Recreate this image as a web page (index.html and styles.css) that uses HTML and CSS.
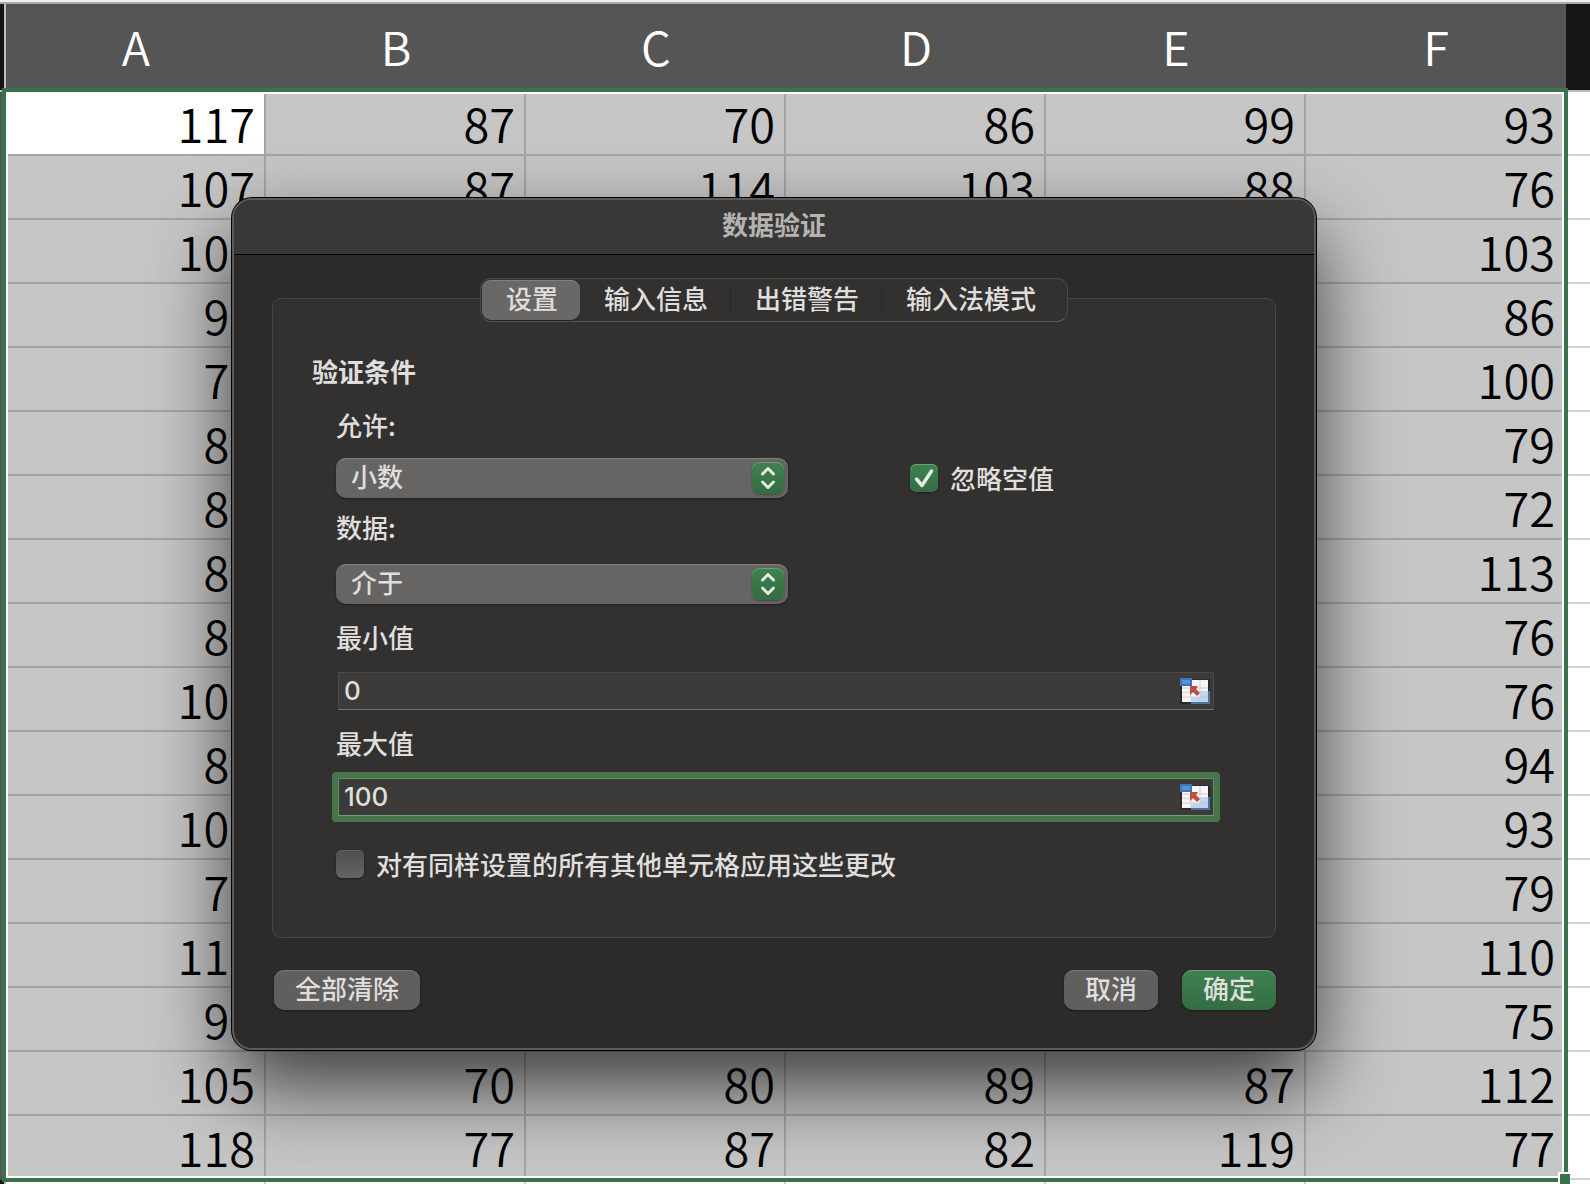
FILE: index.html
```html
<!DOCTYPE html>
<html lang="zh-CN">
<head>
<meta charset="utf-8">
<title>数据验证</title>
<link rel="stylesheet" href="styles.css">
</head>
<body>
<svg class="symbols" aria-hidden="true">
  <symbol id="stepper" viewBox="0 0 32 32">
    <path d="M10.500 12 16 6.500l5.500 5.500M10.500 20 16 25.500l5.500-5.500" fill="none" stroke="#e3ece4" stroke-width="3" stroke-linecap="round" stroke-linejoin="round"/>
  </symbol>
  <symbol id="range" viewBox="0 0 30 26">
    <rect y="1" width="30" height="25" fill="#2a2928"/>
    <rect x="2" y="2" width="26" height="22" fill="#f6f6f6"/>
    <path d="M2 10h26M2 14.500h26M2 19h26M11 2v22M20 2v22" stroke="#dcdcdc" stroke-width="1.500" fill="none"/>
    <path d="M20 13h8.500v11.500H11V19h9z" fill="#c3d5ea"/>
    <path d="M29 13v12H11" fill="none" stroke="#52719c" stroke-width="2"/>
    <path d="M20 19h8M20 19v5" stroke="#b2c7e0" fill="none"/>
    <rect width="12" height="8" fill="#3f74bb"/>
    <rect x="2" y="2" width="8" height="4" fill="#5b90d2"/>
    <path d="M10 8h8l-2 3 4 4-3 3-4-4-3 3z" fill="#bd4c46"/>
  </symbol>
</svg>
<main class="sheet">
  <table class="grid">
    <colgroup><col class="col-rows"><col class="col-data" span="6"><col></colgroup>
    <thead>
      <tr><th class="edge"></th><th scope="col">A</th><th scope="col">B</th><th scope="col">C</th><th scope="col">D</th><th scope="col">E</th><th scope="col">F</th><th class="idle"></th></tr>
    </thead>
    <tbody>
      <tr><th></th><td class="active">117</td><td>87</td><td>70</td><td>86</td><td>99</td><td>93</td><td class="free"></td></tr>
      <tr><th></th><td>107</td><td>87</td><td>114</td><td>103</td><td>88</td><td>76</td><td class="free"></td></tr>
      <tr><th></th><td>100</td><td></td><td></td><td></td><td></td><td>103</td><td class="free"></td></tr>
      <tr><th></th><td>90</td><td></td><td></td><td></td><td></td><td>86</td><td class="free"></td></tr>
      <tr><th></th><td>70</td><td></td><td></td><td></td><td></td><td>100</td><td class="free"></td></tr>
      <tr><th></th><td>80</td><td></td><td></td><td></td><td></td><td>79</td><td class="free"></td></tr>
      <tr><th></th><td>80</td><td></td><td></td><td></td><td></td><td>72</td><td class="free"></td></tr>
      <tr><th></th><td>80</td><td></td><td></td><td></td><td></td><td>113</td><td class="free"></td></tr>
      <tr><th></th><td>80</td><td></td><td></td><td></td><td></td><td>76</td><td class="free"></td></tr>
      <tr><th></th><td>100</td><td></td><td></td><td></td><td></td><td>76</td><td class="free"></td></tr>
      <tr><th></th><td>80</td><td></td><td></td><td></td><td></td><td>94</td><td class="free"></td></tr>
      <tr><th></th><td>100</td><td></td><td></td><td></td><td></td><td>93</td><td class="free"></td></tr>
      <tr><th></th><td>70</td><td></td><td></td><td></td><td></td><td>79</td><td class="free"></td></tr>
      <tr><th></th><td>110</td><td></td><td></td><td></td><td></td><td>110</td><td class="free"></td></tr>
      <tr><th></th><td>90</td><td></td><td></td><td></td><td></td><td>75</td><td class="free"></td></tr>
      <tr><th></th><td>105</td><td>70</td><td>80</td><td>89</td><td>87</td><td>112</td><td class="free"></td></tr>
      <tr><th></th><td>118</td><td>77</td><td>87</td><td>82</td><td>119</td><td>77</td><td class="free"></td></tr>
      <tr class="below"><th></th><td></td><td></td><td></td><td></td><td></td><td></td><td class="free"></td></tr>
    </tbody>
  </table>
  <div class="selection"><span class="handle"></span></div>

  <form class="dialog" role="dialog" aria-labelledby="dialog-title">
    <h1 class="titlebar" id="dialog-title">数据验证</h1>
    <div class="body">
      <div class="tabs" role="tablist">
        <button type="button" class="tab selected" role="tab" aria-selected="true">设置</button>
        <button type="button" class="tab" role="tab">输入信息</button>
        <button type="button" class="tab divided" role="tab">出错警告</button>
        <button type="button" class="tab divided" role="tab">输入法模式</button>
      </div>
      <section class="panel">
        <h2 class="heading">验证条件</h2>
        <div class="fields">
          <label class="caption" for="allow">允许:</label>
          <div class="row">
            <div class="popup">
              <select id="allow"><option>小数</option></select>
              <svg class="stepper"><use href="#stepper"/></svg>
            </div>
            <label class="check">
              <span class="box"><input type="checkbox" checked><svg class="tick" viewBox="0 0 28 28"><path d="M6.500 15 12 21.500 21.500 7" fill="none" stroke="#e3ece4" stroke-width="3.500" stroke-linecap="round" stroke-linejoin="round"/></svg></span>
              忽略空值
            </label>
          </div>
          <label class="caption" for="data">数据:</label>
          <div class="row second">
            <div class="popup">
              <select id="data"><option>介于</option></select>
              <svg class="stepper"><use href="#stepper"/></svg>
            </div>
          </div>
          <label class="caption" for="min">最小值</label>
          <div class="entry">
            <input type="text" id="min" value="0">
            <button type="button" class="pick" aria-label="选择区域"><svg><use href="#range"/></svg></button>
          </div>
          <label class="caption" for="max">最大值</label>
          <div class="entry focused">
            <input type="text" id="max" value="100">
            <button type="button" class="pick" aria-label="选择区域"><svg><use href="#range"/></svg></button>
          </div>
          <label class="check">
            <span class="box"><input type="checkbox"></span>
            对有同样设置的所有其他单元格应用这些更改
          </label>
        </div>
      </section>
      <footer class="actions">
        <button type="button" class="push">全部清除</button>
        <div class="confirm">
          <button type="button" class="push">取消</button>
          <button type="submit" class="push primary">确定</button>
        </div>
      </footer>
    </div>
  </form>
</main>
</body>
</html>
```
FILE: styles.css
```css
* { box-sizing: border-box; }

body {
  margin: 0;
  background: #fff;
  font-family: "Noto Sans CJK SC", sans-serif;
}

.symbols { display: none; }

/* Spreadsheet */
.sheet {
  position: relative;
  height: 100vh;
  overflow: hidden;
  border-top: 2px solid #f0f0f0;
}

.grid {
  width: 100%;
  table-layout: fixed;
  border-collapse: separate;
  border-spacing: 0;
  border-top: 2px solid #a9a9a9;
  font-size: 47px;
  line-height: 60px;
}

.col-rows { width: 6px; }
.col-data { width: 260px; }

.grid th,
.grid td { padding: 0; font-weight: 350; }

.grid thead th {
  height: 88px;
  padding-bottom: 4px;
  background: #555;
  color: #fff;
}

.grid thead .edge {
  background: #161513;
  border-right: 2px solid #c0bfc0;
  border-bottom: 2px solid #c0bfc0;
}

.grid thead .idle {
  background: #161616;
  border-bottom: 2px solid #bdb9bd;
}

.grid tbody th { background: #555; }

.grid td {
  height: 64px;
  padding-right: 9px;
  text-align: right;
  color: #000;
  background: #c6c6c6;
  border-right: 2px solid #a4a4a4;
  border-bottom: 2px solid #a4a4a4;
}

.grid td.active { background: #fff; }

.grid td.free,
.grid .below td {
  background: #fff;
  border-color: #d2d1d2;
}

.grid td.free { border-right: 0; }

.grid .below th {
  background: #161513;
  border-right: 2px solid #c0bfc0;
}

.selection {
  position: absolute;
  left: 2px;
  top: 86px;
  width: 1566px;
  height: 1094px;
  border: 4px solid #3a734b;
  box-shadow: inset 0 0 0 2px #fff;
}

.handle {
  position: absolute;
  right: -6px;
  bottom: -6px;
  width: 12px;
  height: 12px;
  background: #3a734b;
  border: solid #fff;
  border-width: 2px 0 0 2px;
}

/* Dialog window */
.dialog {
  position: absolute;
  left: 232px;
  top: 196px;
  width: 1084px;
  overflow: hidden;
  border: 2px solid #5b5a58;
  border-radius: 20px;
  background: #2c2b29;
  box-shadow: 0 0 0 1px #000, 0 36px 80px rgba(0, 0, 0, 0.7);
  color: #dfdedd;
  font-size: 26px;
  line-height: 30px;
  font-weight: 500;
}

.dialog button,
.dialog input,
.dialog select {
  margin: 0;
  font: inherit;
  color: inherit;
}

.titlebar {
  height: 55px;
  margin: 0;
  padding-top: 9px;
  border-bottom: 1px solid #000;
  background: #393836;
  color: #b4b3b2;
  font-size: 26px;
  line-height: 30px;
  font-weight: 700;
  text-align: center;
}

.body { padding: 23px 38px 38px; }

.tabs {
  position: relative;
  display: flex;
  width: max-content;
  height: 44px;
  margin: 0 auto -24px;
  padding: 1px;
  border: 1px solid #484745;
  border-bottom-color: #5c5b59;
  border-radius: 11px;
  background: #32312f;
}

.tab {
  padding: 0 22px 4px 24px;
  border: 0;
  background: none;
}

.tab:last-child { padding-right: 30px; }

.tab.divided {
  padding-left: 25px;
  background: linear-gradient(#292826, #292826) 0 8px / 1px 24px no-repeat;
}

.dialog .tab.selected {
  border-radius: 9px;
  background: #696866;
  box-shadow: inset 0 1px 0 #80807e, 0 1px 1px #222;
}

.panel {
  padding: 57px 61px 58px 39px;
  border: 1px solid #474644;
  border-radius: 9px;
  background: #32312f;
}

.heading {
  margin: 0 0 24px;
  font-size: 26px;
  line-height: 30px;
  font-weight: 700;
}

.fields {
  display: flex;
  flex-direction: column;
  padding-left: 24px;
}

.caption { align-self: flex-start; }

.row {
  display: flex;
  align-items: center;
  gap: 122px;
  margin: 18px 0 14px;
}

.row.second { margin: 22px 0 18px; }

.popup {
  display: grid;
  width: 452px;
}

.popup > * { grid-area: 1 / 1; }

.popup select {
  appearance: none;
  height: 40px;
  padding: 0 48px 4px 15px;
  border: 0;
  border-radius: 10px;
  background: #666563;
  box-shadow: inset 0 1px 0 #80807e, 0 1px 2px #1f1e1d;
}

.stepper {
  width: 32px;
  height: 32px;
  margin-right: 4px;
  place-self: center end;
  pointer-events: none;
  border-radius: 8px;
  background: linear-gradient(#3e814f, #356c44);
  box-shadow: inset 0 1px 0 #6d9e79, 0 1px 2px #444;
}

.check {
  display: flex;
  align-items: center;
  gap: 12px;
}

.box { display: grid; }
.box > * { grid-area: 1 / 1; }

.box input {
  appearance: none;
  width: 28px;
  height: 28px;
  border-radius: 6px;
  background: linear-gradient(#4f4e4c, #666563);
  box-shadow: inset 0 1px 0 #666563, 0 1px 2px #1f1e1d;
}

.box input:checked {
  background: linear-gradient(#3e814f, #356c44);
  box-shadow: inset 0 1px 0 #6d9e79, 0 1px 2px #1f1e1d;
}

.tick {
  width: 28px;
  height: 28px;
  pointer-events: none;
}

.entry {
  display: flex;
  align-items: center;
  height: 38px;
  margin: 20px 0 18px 2px;
  padding-right: 3px;
  border: 1px solid #4b4a48;
  border-bottom-color: #72716f;
  background: #3c3b39;
}

.entry.focused {
  margin-bottom: 33px;
  border-color: #5c9066;
  border-bottom-color: #6f9f77;
  box-shadow: 0 0 0 6px #477449;
  border-radius: 1px;
}

.entry input {
  flex: 1;
  min-width: 0;
  height: 36px;
  padding: 0 5px 2px;
  border: 0;
  outline: 0;
  background: none;
  font-family: Inter, "Noto Sans CJK SC", sans-serif;
}

.pick {
  padding: 0;
  border: 0;
  background: none;
}

.pick svg {
  display: block;
  width: 30px;
  height: 26px;
}

.actions,
.confirm {
  display: flex;
  justify-content: space-between;
}

.actions {
  margin-top: 32px;
  padding-left: 2px;
}

.confirm { gap: 24px; }

.push {
  height: 40px;
  padding: 0 21px 4px;
  border: 0;
  border-radius: 10px;
  background: #605f5d;
  box-shadow: inset 0 1px 0 #7a7977, 0 1px 2px #1a1918;
}

.push.primary {
  background: linear-gradient(#3e814f, #356c44);
  box-shadow: inset 0 1px 0 #6d9e79, 0 1px 2px #1a1918;
}
```
